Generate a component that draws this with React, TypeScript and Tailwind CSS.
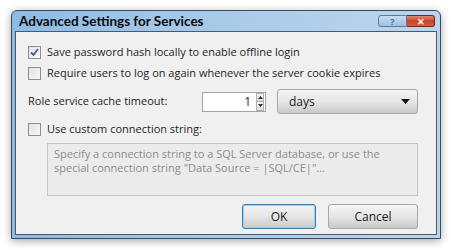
import React from 'react';

const font = { fontFamily: '"Open Sans", "Noto Sans", sans-serif' };

const CheckBox: React.FC<{ checked?: boolean }> = ({ checked }) => (
  <span className="relative flex h-[13px] w-[13px] shrink-0 items-center justify-center border border-[#8e8f8f] bg-gradient-to-br from-[#dcdcdc] to-[#fbfbfb]">
    <span className="absolute inset-[1px] border border-[#f4f4f4]/70" />
    {checked && (
      <svg width="9" height="9" viewBox="0 0 9 9" className="relative">
        <path d="M1 4.5 L3.5 7 L8 1" fill="none" stroke="#3f5d9a" strokeWidth="1.8" />
      </svg>
    )}
  </span>
);

const Win7Button: React.FC<{ children: React.ReactNode; className?: string; focused?: boolean }> = ({
  children,
  className = '',
  focused,
}) => (
  <div
    className={`flex items-center rounded-[3px] border ${
      focused ? 'border-[#3c7fb1] shadow-[inset_0_0_0_1px_#8fd3f8]' : 'border-[#a8a8a8]'
    } bg-gradient-to-b from-[#f4f4f4] via-[#e6e6e6] to-[#c9c9c9] text-[11px] text-[#1a1a1a] ${className}`}
  >
    {children}
  </div>
);

export default function App() {
  return (
    <div className="h-[250px] w-[451px] bg-white pl-[11px] pt-[10px]" style={font}>
      {/* window */}
      <div className="flex h-[229px] w-[430px] flex-col rounded-t-[6px] border border-[#3b4a5c] bg-gradient-to-r from-[#8dbbe4] via-[#a9cbea] to-[#bcd5ee] px-[3px] pb-[3px] shadow-[0_2px_8px_rgba(0,0,0,0.35)]">
        {/* title bar */}
        <div className="flex h-[20px] items-start justify-between">
          <span
            className="pl-[4px] pt-[1px] text-[13.5px] font-bold leading-[18px] text-[#0b0b0b]"
            style={{ fontFamily: 'Lato, "Open Sans", sans-serif' }}
          >
            Advanced Settings for Services
          </span>
          <div className="mr-[2px] mt-[4px] flex">
            <div className="flex h-[12px] w-[29px] items-center justify-center rounded-l-[3px] border border-[#5f7a99] bg-gradient-to-b from-[#c8dcf0] to-[#9fc0e2] text-[9px] font-bold leading-none text-[#5b6f88]">
              ?
            </div>
            <div className="flex h-[12px] w-[28px] items-center justify-center rounded-r-[3px] border border-l-0 border-[#6b2a22] bg-gradient-to-b from-[#e08870] via-[#c9402e] to-[#d8602c] text-[9px] font-bold leading-none text-white">
              ✕
            </div>
          </div>
        </div>

        {/* client area */}
        <div className="flex flex-1 flex-col border border-[#4a5a6c] bg-[#f0f0f0] pl-[12px] pr-[18px] text-[11px] text-[#1e1e1e]">
          <label className="mt-[12px] flex h-[16px] items-center gap-[6px]">
            <CheckBox checked />
            <span>Save password hash locally to enable offline login</span>
          </label>
          <label className="mt-[5px] flex h-[16px] items-center gap-[6px]">
            <CheckBox />
            <span>Require users to log on again whenever the server cookie expires</span>
          </label>

          <div className="mt-[8px] flex h-[25px] items-center">
            <span className="w-[174px]">Role service cache timeout:</span>
            <div className="flex h-[20px] w-[64px] items-center border border-[#a3a3a3] bg-white pr-[1px]">
              <span className="flex-1 pr-[5px] text-right text-[12px]">1</span>
              <div className="flex h-[18px] w-[8px] flex-col">
                <div className="flex flex-1 items-center justify-center border border-[#b0b0b0] bg-gradient-to-b from-[#f4f4f4] to-[#dadada]">
                  <svg width="5" height="3" viewBox="0 0 5 3">
                    <path d="M0 3 L2.5 0 L5 3 Z" fill="#333" />
                  </svg>
                </div>
                <div className="flex flex-1 items-center justify-center border border-t-0 border-[#b0b0b0] bg-gradient-to-b from-[#f4f4f4] to-[#dadada]">
                  <svg width="5" height="3" viewBox="0 0 5 3">
                    <path d="M0 0 L2.5 3 L5 0 Z" fill="#333" />
                  </svg>
                </div>
              </div>
            </div>
            <Win7Button className="ml-[11px] h-[25px] flex-1 justify-between pl-[11px] pr-[7px]">
              <span className="text-[12px]">days</span>
              <svg width="9" height="5" viewBox="0 0 9 5">
                <path d="M0 0 L9 0 L4.5 5 Z" fill="#111" />
              </svg>
            </Win7Button>
          </div>

          <label className="mt-[7px] flex h-[16px] items-center gap-[6px]">
            <CheckBox />
            <span>Use custom connection string:</span>
          </label>

          <div className="ml-[19px] mt-[6px] h-[53px] border border-[#c6c6c6] bg-[#ebebeb] px-[6px] pt-[3px] leading-[14px] text-[#8d8d8d]">
            Specify a connection string to a SQL Server database, or use the
            <br />
            special connection string "Data Source = |SQL/CE|"...
          </div>

          <div className="mt-[8px] flex justify-end gap-[12px]">
            <Win7Button focused className="h-[25px] w-[74px] justify-center">
              <span className="text-[12px]">OK</span>
            </Win7Button>
            <Win7Button className="h-[25px] w-[90px] justify-center">
              <span className="text-[12px]">Cancel</span>
            </Win7Button>
          </div>
        </div>
      </div>
    </div>
  );
}
